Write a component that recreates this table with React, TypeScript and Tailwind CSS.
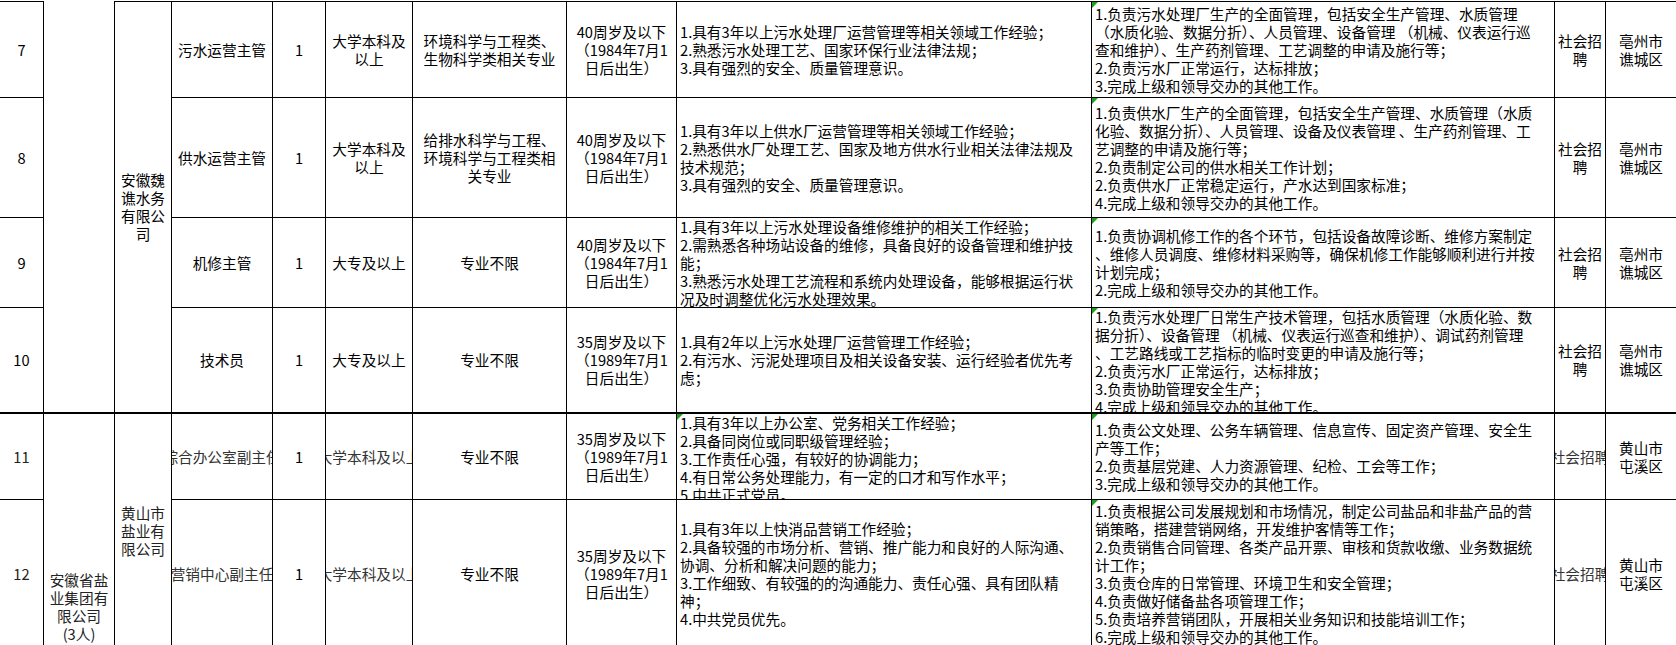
import React from "react";

const base =
  "relative overflow-hidden border-black border-r flex flex-col items-center [justify-content:safe_center] text-center";
const left = "items-start text-left pl-[3px]";

function Lines({ lines }: { lines: string[] }) {
  return (
    <>
      {lines.map((l, i) => (
        <div key={i} className="whitespace-pre">
          {l}
        </div>
      ))}
    </>
  );
}

function Tri() {
  return (
    <span className="absolute left-0 top-0 h-0 w-0 border-t-[6px] border-r-[6px] border-t-[#1f9e1f] border-r-transparent" />
  );
}

function Clip({ text }: { text: string }) {
  return (
    <div className="flex h-full w-full flex-row items-center justify-center">
      <span className="shrink-0 whitespace-nowrap text-[#333]">{text}</span>
    </div>
  );
}

export default function App() {
  return (
    <div className="h-[645px] w-[1676px] overflow-hidden bg-white pt-px font-['Noto_Sans_CJK_SC','Noto_Sans_CJK_JP',sans-serif] text-[14.67px] leading-[18px] text-black">
      <div className="grid grid-cols-[44px_71px_57px_101px_53px_87px_154px_110px_415px_463px_51px_71px] grid-rows-[97px_120px_90px_106px_86px_148px]">
        {/* Row 7 */}
        <div className={`${base} border-t border-b`}>7</div>
        <div className="row-span-4 border-r border-b-2 border-black" />
        <div className={`${base} row-span-4 border-t border-b-2`}>
          <Lines lines={["安徽魏", "谯水务", "有限公", "司"]} />
        </div>
        <div className={`${base} border-t border-b`}>污水运营主管</div>
        <div className={`${base} border-t border-b`}>1</div>
        <div className={`${base} border-t border-b`}>
          <Lines lines={["大学本科及", "以上"]} />
        </div>
        <div className={`${base} border-t border-b`}>
          <Lines lines={["环境科学与工程类、", "生物科学类相关专业"]} />
        </div>
        <div className={`${base} border-t border-b`}>
          <Lines lines={["40周岁及以下", "（1984年7月1", "日后出生）"]} />
        </div>
        <div className={`${base} ${left} border-t border-b`}>
          <Lines
            lines={[
              "1.具有3年以上污水处理厂运营管理等相关领域工作经验；",
              "2.熟悉污水处理工艺、国家环保行业法律法规；",
              "3.具有强烈的安全、质量管理意识。",
            ]}
          />
        </div>
        <div className={`${base} ${left} border-t border-b`}>
          <Tri />
          <Lines
            lines={[
              "1.负责污水处理厂生产的全面管理，包括安全生产管理、水质管理",
              "（水质化验、数据分折）、人员管理、设备管理 （机械、仪表运行巡",
              "查和维护）、生产药剂管理、工艺调整的申请及施行等；",
              "2.负责污水厂正常运行，达标排放；",
              "3.完成上级和领导交办的其他工作。",
            ]}
          />
        </div>
        <div className={`${base} border-t border-b`}>
          <Lines lines={["社会招", "聘"]} />
        </div>
        <div className={`${base} border-t border-b`}>
          <Lines lines={["亳州市", "谯城区"]} />
        </div>

        {/* Row 8 */}
        <div className={`${base} border-b`}>8</div>
        <div className={`${base} border-b`}>供水运营主管</div>
        <div className={`${base} border-b`}>1</div>
        <div className={`${base} border-b`}>
          <Lines lines={["大学本科及", "以上"]} />
        </div>
        <div className={`${base} border-b`}>
          <Lines lines={["给排水科学与工程、", "环境科学与工程类相", "关专业"]} />
        </div>
        <div className={`${base} border-b`}>
          <Lines lines={["40周岁及以下", "（1984年7月1", "日后出生）"]} />
        </div>
        <div className={`${base} ${left} border-b`}>
          <Lines
            lines={[
              "1.具有3年以上供水厂运营管理等相关领域工作经验；",
              "2.熟悉供水厂处理工艺、国家及地方供水行业相关法律法规及",
              "技术规范；",
              "3.具有强烈的安全、质量管理意识。",
            ]}
          />
        </div>
        <div className={`${base} ${left} border-b`}>
          <Tri />
          <Lines
            lines={[
              "1.负责供水厂生产的全面管理，包括安全生产管理、水质管理（水质",
              "化验、数据分折）、人员管理、设备及仪表管理 、生产药剂管理、工",
              "艺调整的申请及施行等；",
              "2.负责制定公司的供水相关工作计划；",
              "2.负责供水厂正常稳定运行，产水达到国家标准；",
              "4.完成上级和领导交办的其他工作。",
            ]}
          />
        </div>
        <div className={`${base} border-b`}>
          <Lines lines={["社会招", "聘"]} />
        </div>
        <div className={`${base} border-b`}>
          <Lines lines={["亳州市", "谯城区"]} />
        </div>

        {/* Row 9 */}
        <div className={`${base} border-b`}>9</div>
        <div className={`${base} border-b`}>机修主管</div>
        <div className={`${base} border-b`}>1</div>
        <div className={`${base} border-b`}>大专及以上</div>
        <div className={`${base} border-b`}>专业不限</div>
        <div className={`${base} border-b`}>
          <Lines lines={["40周岁及以下", "（1984年7月1", "日后出生）"]} />
        </div>
        <div className={`${base} ${left} border-b`}>
          <Lines
            lines={[
              "1.具有3年以上污水处理设备维修维护的相关工作经验；",
              "2.需熟悉各种场站设备的维修，具备良好的设备管理和维护技",
              "能；",
              "3.熟悉污水处理工艺流程和系统内处理设备，能够根据运行状",
              "况及时调整优化污水处理效果。",
            ]}
          />
        </div>
        <div className={`${base} ${left} border-b`}>
          <Tri />
          <Lines
            lines={[
              "1.负责协调机修工作的各个环节，包括设备故障诊断、维修方案制定",
              "、维修人员调度、维修材料采购等，确保机修工作能够顺利进行并按",
              "计划完成；",
              "2.完成上级和领导交办的其他工作。",
            ]}
          />
        </div>
        <div className={`${base} border-b`}>
          <Lines lines={["社会招", "聘"]} />
        </div>
        <div className={`${base} border-b`}>
          <Lines lines={["亳州市", "谯城区"]} />
        </div>

        {/* Row 10 */}
        <div className={`${base} border-b-2`}>10</div>
        <div className={`${base} border-b-2`}>技术员</div>
        <div className={`${base} border-b-2`}>1</div>
        <div className={`${base} border-b-2`}>大专及以上</div>
        <div className={`${base} border-b-2`}>专业不限</div>
        <div className={`${base} border-b-2`}>
          <Lines lines={["35周岁及以下", "（1989年7月1", "日后出生）"]} />
        </div>
        <div className={`${base} ${left} border-b-2`}>
          <Lines
            lines={[
              "1.具有2年以上污水处理厂运营管理工作经验；",
              "2.有污水、污泥处理项目及相关设备安装、运行经验者优先考",
              "虑；",
            ]}
          />
        </div>
        <div className={`${base} ${left} border-b-2`}>
          <Tri />
          <Lines
            lines={[
              "1.负责污水处理厂日常生产技术管理，包括水质管理（水质化验、数",
              "据分折）、设备管理 （机械、仪表运行巡查和维护）、调试药剂管理",
              "、工艺路线或工艺指标的临时变更的申请及施行等；",
              "2.负责污水厂正常运行，达标排放；",
              "3.负责协助管理安全生产；",
              "4.完成上级和领导交办的其他工作。",
            ]}
          />
        </div>
        <div className={`${base} border-b-2`}>
          <Lines lines={["社会招", "聘"]} />
        </div>
        <div className={`${base} border-b-2`}>
          <Lines lines={["亳州市", "谯城区"]} />
        </div>

        {/* Row 11 */}
        <div className={`${base} border-b text-[#222]`}>11</div>
        <div className={`${base} row-span-2 border-b !justify-end pb-[4px] text-[#222]`}>
          <Lines lines={["安徽省盐", "业集团有", "限公司", "(3人)"]} />
        </div>
        <div className={`${base} row-span-2 border-b text-[#222]`}>
          <Lines lines={["黄山市", "盐业有", "限公司"]} />
        </div>
        <div className={`${base} border-b`}>
          <Clip text="综合办公室副主任" />
        </div>
        <div className={`${base} border-b`}>1</div>
        <div className={`${base} border-b`}>
          <Clip text="大学本科及以上" />
        </div>
        <div className={`${base} border-b`}>专业不限</div>
        <div className={`${base} border-b`}>
          <Lines lines={["35周岁及以下", "（1989年7月1", "日后出生）"]} />
        </div>
        <div className={`${base} ${left} border-b`}>
          <Tri />
          <Lines
            lines={[
              "1.具有3年以上办公室、党务相关工作经验；",
              "2.具备同岗位或同职级管理经验；",
              "3.工作责任心强，有较好的协调能力；",
              "4.有日常公务处理能力，有一定的口才和写作水平；",
              "5.中共正式党员。",
            ]}
          />
        </div>
        <div className={`${base} ${left} border-b`}>
          <Tri />
          <Lines
            lines={[
              "1.负责公文处理、公务车辆管理、信息宣传、固定资产管理、安全生",
              "产等工作；",
              "2.负责基层党建、人力资源管理、纪检、工会等工作；",
              "3.完成上级和领导交办的其他工作。",
            ]}
          />
        </div>
        <div className={`${base} border-b`}>
          <Clip text="社会招聘" />
        </div>
        <div className={`${base} border-b`}>
          <Lines lines={["黄山市", "屯溪区"]} />
        </div>

        {/* Row 12 */}
        <div className={`${base} border-b text-[#222]`}>12</div>
        <div className={`${base} border-b`}>
          <Clip text="营销中心副主任" />
        </div>
        <div className={`${base} border-b`}>1</div>
        <div className={`${base} border-b`}>
          <Clip text="大学本科及以上" />
        </div>
        <div className={`${base} border-b`}>专业不限</div>
        <div className={`${base} border-b`}>
          <Lines lines={["35周岁及以下", "（1989年7月1", "日后出生）"]} />
        </div>
        <div className={`${base} ${left} border-b`}>
          <Lines
            lines={[
              "1.具有3年以上快消品营销工作经验；",
              "2.具备较强的市场分析、营销、推广能力和良好的人际沟通、",
              "协调、分析和解决问题的能力；",
              "3.工作细致、有较强的的沟通能力、责任心强、具有团队精",
              "神；",
              "4.中共党员优先。",
            ]}
          />
        </div>
        <div className={`${base} ${left} border-b`}>
          <Tri />
          <Lines
            lines={[
              "1.负责根据公司发展规划和市场情况，制定公司盐品和非盐产品的营",
              "销策略，搭建营销网络，开发维护客情等工作；",
              "2.负责销售合同管理、各类产品开票、审核和货款收缴、业务数据统",
              "计工作；",
              "3.负责仓库的日常管理、环境卫生和安全管理；",
              "4.负责做好储备盐各项管理工作；",
              "5.负责培养营销团队，开展相关业务知识和技能培训工作；",
              "6.完成上级和领导交办的其他工作。",
            ]}
          />
        </div>
        <div className={`${base} border-b`}>
          <Clip text="社会招聘" />
        </div>
        <div className={`${base} border-b`}>
          <Lines lines={["黄山市", "屯溪区"]} />
        </div>
      </div>
    </div>
  );
}
